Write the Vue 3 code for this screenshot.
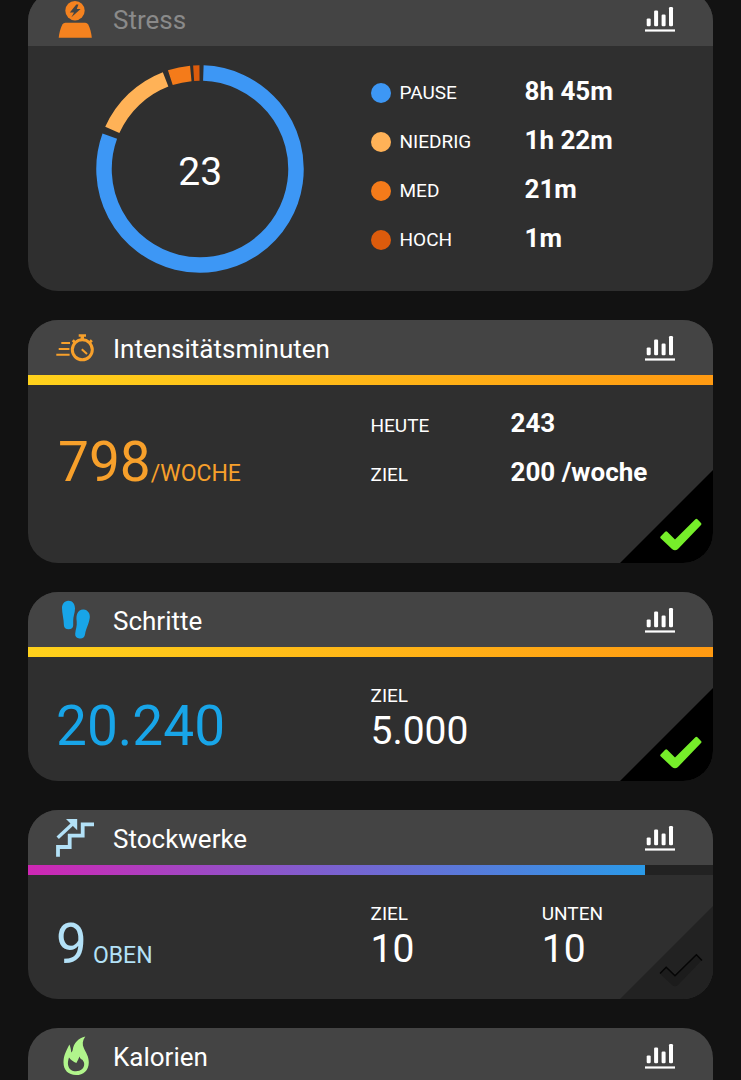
<script setup>
import { computed } from 'vue'

const stress = {
  score: 23,
  levels: [
    { label: 'PAUSE', value: '8h 45m', color: '#3d97f5', from: 2, to: 290 },
    { label: 'NIEDRIG', value: '1h 22m', color: '#ffb257', from: 294, to: 339 },
    { label: 'MED', value: '21m', color: '#f47b1a', from: 342, to: 354.5 },
    { label: 'HOCH', value: '1m', color: '#dc5b0c', from: 356.2, to: 359.7 },
  ],
}

const cards = [
  { id: 'stress', title: 'Stress', faded: true },
  {
    id: 'intensity',
    title: 'Intensitätsminuten',
    progress: 100,
    bar: 'bar-gold',
    value: '798',
    unit: '/WOCHE',
    done: true,
    rows: [
      { label: 'HEUTE', value: '243' },
      { label: 'ZIEL', value: '200 /woche' },
    ],
  },
  {
    id: 'steps',
    title: 'Schritte',
    progress: 100,
    bar: 'bar-gold',
    value: '20.240',
    done: true,
    stats: [{ label: 'ZIEL', value: '5.000' }],
  },
  {
    id: 'floors',
    title: 'Stockwerke',
    progress: 90,
    bar: 'bar-violet',
    value: '9',
    unit: 'OBEN',
    done: false,
    stats: [
      { label: 'ZIEL', value: '10' },
      { label: 'UNTEN', value: '10' },
    ],
  },
  { id: 'calories', title: 'Kalorien' },
]

function arc(from, to) {
  const point = (deg) => {
    const rad = ((deg - 90) * Math.PI) / 180
    return `${104 + 96 * Math.cos(rad)} ${104 + 96 * Math.sin(rad)}`
  }
  return `M${point(from)} A96 96 0 ${to - from > 180 ? 1 : 0} 1 ${point(to)}`
}

const arcs = computed(() => stress.levels.map((l) => ({ color: l.color, d: arc(l.from, l.to) })))
</script>

<template>
  <main class="feed">
    <section v-for="card in cards" :key="card.id" class="card" :class="card.id">
      <header class="card-head">
        <svg v-if="card.id === 'stress'" class="icon" viewBox="0 0 40 40" aria-hidden="true">
          <circle cx="19" cy="12.7" r="9.7" fill="#f5821f" />
          <path d="M20.3 6.4H22.4L20.8 11H24.6L15.4 19.2L18 14.4H13.8Z" fill="#444" />
          <path d="M2.7 39.8C3.2 34.5 4.6 29.6 6.4 26.4Q7.4 24.7 9.4 24.7H29.2Q31.2 24.7 32.2 26.4C34 29.6 35.3 34.5 35.8 39.8Z" fill="#f5821f" />
        </svg>
        <svg v-else-if="card.id === 'intensity'" class="icon" viewBox="0 0 40 40" fill="none" stroke="#f7a02b" aria-hidden="true">
          <circle cx="26.3" cy="22.8" r="10" stroke-width="3" />
          <path d="M22.7 8.5H30" stroke-width="2.6" />
          <path d="M26.3 9V13" stroke-width="3.4" />
          <path d="M16.8 13.2L19 15.6M35.8 13.2L33.6 15.6" stroke-width="2.8" />
          <path d="M25.8 22.2L31 27" stroke-width="2" />
          <path d="M5.3 16H14M2.7 22H13.4M.3 27.7H13.6" stroke-width="2" />
        </svg>
        <svg v-else-if="card.id === 'steps'" class="icon" viewBox="0 0 40 40" fill="#18a5e8" aria-hidden="true">
          <path d="M12.2 1.7C16.4 1.5 19 4.8 19 9.5C19 14.2 17.2 17 17.2 21.5V26.2C17.2 28.8 15.4 30.3 12.6 30.3C9.8 30.3 8 28.8 7.9 26.2C7.8 19.5 6 14.5 6 9C6 4.8 8.6 1.9 12.2 1.7Z" />
          <path d="M27.6 10.4C31.8 10.8 34.3 14.3 33.8 18.6C33.2 24.4 30.2 28.8 29 35.6C28.5 38.4 26.4 40 23.6 39.5C20.6 39 18.8 37.2 19.2 34.4C19.6 30 21.2 27.2 20.7 22.4C20.2 18.8 20.4 16.4 21.4 14.2C22.5 11.6 24.8 10.2 27.6 10.4Z" />
        </svg>
        <svg v-else-if="card.id === 'floors'" class="icon" viewBox="0 0 40 40" fill="none" stroke="#b3e1f7" aria-hidden="true">
          <path d="M2 39.8V30H13.7V18.7H26.7V7.3H38" stroke-width="3.8" />
          <path d="M1.7 20.8L17 6.4" stroke-width="3.4" />
          <path d="M10 2H21.2V13.2Z" fill="#b3e1f7" stroke="none" />
        </svg>
        <svg v-else class="icon" viewBox="0 0 40 40" aria-hidden="true">
          <path
            fill="#b1f58c"
            fill-rule="evenodd"
            d="M29.3 1.6C26.4 5.6 26 9.4 28 13.6C29.8 17.6 32.8 21.4 32.8 27.4C32.8 35.2 27.4 40 20 40C12.4 40 7.5 35.4 7.5 27.6C7.5 21 9.4 17.4 13.4 9.6C14.6 12.2 15 14.8 15.2 17.4C16 17 16.6 16 16.8 14.6C17.6 8.4 22.6 3 29.3 1.6ZM13 22.4C12 25.4 11.6 28 12.2 30.4C13 34 15.8 36.2 20 36.2C24.8 36.2 28.2 33.4 28.2 29C28.2 27.4 27.4 26 26 24.6C24.8 24 24 23 23.4 21.4C22.8 23.4 21.6 25.6 20.4 28C18.4 27 15 25.4 13 22.4Z"
          />
        </svg>
        <h2 class="title" :class="{ faded: card.faded }">{{ card.title }}</h2>
        <button class="chart-btn" type="button" :aria-label="`${card.title} Verlauf`">
          <svg viewBox="0 0 30 28" fill="#fff" aria-hidden="true">
            <rect x="1.7" y="14.4" width="4" height="7.8" rx="1.2" />
            <rect x="9.1" y="6.6" width="4" height="15.6" rx="1.2" />
            <rect x="16.6" y="10.6" width="4" height="11.6" rx="1.2" />
            <rect x="24" y="3" width="4" height="19.2" rx="1.2" />
            <rect y="25.4" width="30" height="2.2" />
          </svg>
        </button>
      </header>

      <div v-if="card.bar" class="track">
        <div class="fill" :class="card.bar" :style="{ width: card.progress + '%' }"></div>
      </div>

      <div v-if="card.id === 'stress'" class="card-body stress-body">
        <div class="donut">
          <svg viewBox="0 0 208 208" fill="none" stroke-width="15.5" aria-hidden="true">
            <path v-for="a in arcs" :key="a.color" :d="a.d" :stroke="a.color" />
          </svg>
          <span class="score">{{ stress.score }}</span>
        </div>
        <dl class="rows legend">
          <div v-for="l in stress.levels" :key="l.label" class="row">
            <dt>
              <svg class="dot" viewBox="0 0 20 20" :fill="l.color" aria-hidden="true"><circle cx="10" cy="10" r="10" /></svg>
              {{ l.label }}
            </dt>
            <dd>{{ l.value }}</dd>
          </div>
        </dl>
      </div>

      <div v-else-if="card.value" class="card-body" :class="{ 'rows-body': card.rows }">
        <p class="main-value">
          <span class="number">{{ card.value }}</span><span v-if="card.unit" class="unit">{{ card.unit }}</span>
        </p>
        <dl v-if="card.rows" class="rows">
          <div v-for="r in card.rows" :key="r.label" class="row">
            <dt>{{ r.label }}</dt>
            <dd>{{ r.value }}</dd>
          </div>
        </dl>
        <dl v-else class="stats">
          <div v-for="s in card.stats" :key="s.label">
            <dt>{{ s.label }}</dt>
            <dd>{{ s.value }}</dd>
          </div>
        </dl>
      </div>

      <svg v-if="card.value" class="corner" :class="{ done: card.done }" viewBox="0 0 93 93" aria-hidden="true">
        <path class="corner-bg" d="M93 0V93H0Z" />
        <g transform="translate(0 1)">
          <path class="check" d="M40.6 65.4L45.2 60.8Q46.2 59.8 47.2 60.8L55 68.4L75.4 48.2Q76.4 47.2 77.4 48.2L81 52Q82 53 81 54L58 78Q55 80.6 52 78L40.6 67.2Q39.8 66.3 40.6 65.4Z" />
          <path v-if="!card.done" d="M40 66.4L46.2 60.2L55 68.8L76.4 47.8L82 53.4" fill="none" stroke="#050505" stroke-width="1.4" />
        </g>
      </svg>
    </section>
  </main>
</template>

<style>
body {
  margin: 0;
  background: #121212;
}
</style>

<style scoped>
.feed {
  box-sizing: border-box;
  height: 100vh;
  overflow: hidden;
  display: flex;
  flex-direction: column;
  gap: 29px;
  padding: 0 28px;
  background: #121212;
  color: #fff;
  font-family: Roboto, sans-serif;
}

.card {
  position: relative;
  flex: none;
  overflow: hidden;
  border-radius: 30px;
  background: #2f2f2f;
}

/* the feed is scrolled a little past the top of the first card */
.card.stress {
  margin-top: -9px;
}

.card.calories {
  border-radius: 30px 30px 0 0;
}

.card-head {
  display: flex;
  align-items: center;
  gap: 17px;
  padding: 7px 38px 8px 28px;
  background: #444;
}

.icon {
  flex: none;
  width: 40px;
  height: 40px;
}

.title {
  flex: 1;
  margin: 4px 0 0;
  font-size: 26px;
  font-weight: 400;
  line-height: 30px;
}

.title.faded {
  color: #8a8a8a;
}

.chart-btn {
  width: 30px;
  height: 28px;
  padding: 0;
  border: 0;
  background: none;
  cursor: pointer;
}

.chart-btn svg {
  display: block;
}

.track {
  height: 10px;
  background: #222;
}

.fill {
  height: 100%;
}

.bar-gold {
  background: linear-gradient(90deg, #ffd21c, #ff9a12);
}

.bar-violet {
  background: linear-gradient(90deg, #cf27b4, #7a62d0 50%, #2a9ae8);
}

.card-body {
  display: grid;
  grid-template-columns: 1fr 1fr;
  padding: 27px 0;
}

.stress-body {
  padding: 19px 0 18px;
}

.rows-body {
  padding: 23px 0 73px;
}

.donut {
  display: grid;
  place-items: center;
  padding-left: 2px;
}

.donut svg,
.score {
  grid-area: 1 / 1;
}

.donut svg {
  width: 208px;
  height: 208px;
}

.score {
  padding-top: 5px;
  font-size: 39px;
  line-height: 46px;
}

dl,
dd,
p {
  margin: 0;
}

dt {
  font-size: 19px;
  line-height: 24px;
}

.rows {
  display: flex;
  flex-direction: column;
  gap: 19px;
  padding-bottom: 3px;
}

.row {
  display: grid;
  grid-template-columns: 140px 1fr;
  align-items: baseline;
}

.row dd {
  font-size: 26px;
  font-weight: 700;
  line-height: 30px;
}

.legend {
  padding-top: 11px;
}

.legend .row {
  grid-template-columns: 154px 1fr;
  align-items: end;
}

.legend dt {
  display: flex;
  align-items: center;
  gap: 9px;
  line-height: 26px;
}

.dot {
  width: 20px;
  height: 20px;
}

.main-value {
  align-self: end;
  display: flex;
  align-items: baseline;
  padding-left: 28px;
  line-height: 56px;
  color: #f7a02b;
}

.number {
  font-size: 55px;
}

.unit {
  font-size: 23px;
  line-height: 24px;
}

.intensity .main-value {
  padding-left: 30px;
}

.steps .main-value {
  color: #18a5e8;
}

.floors .main-value {
  gap: 6px;
  color: #b3e1f7;
}

.stats {
  display: grid;
  grid-template-columns: 1fr 1fr;
}

.stats dd {
  font-size: 39px;
  line-height: 46px;
}

.corner {
  position: absolute;
  right: 0;
  bottom: 0;
  width: 93px;
  height: 93px;
}

.corner-bg {
  fill: #222;
}

.check {
  fill: #1c1c1c;
}

.done .corner-bg {
  fill: #000;
}

.done .check {
  fill: #76ee2a;
}
</style>
